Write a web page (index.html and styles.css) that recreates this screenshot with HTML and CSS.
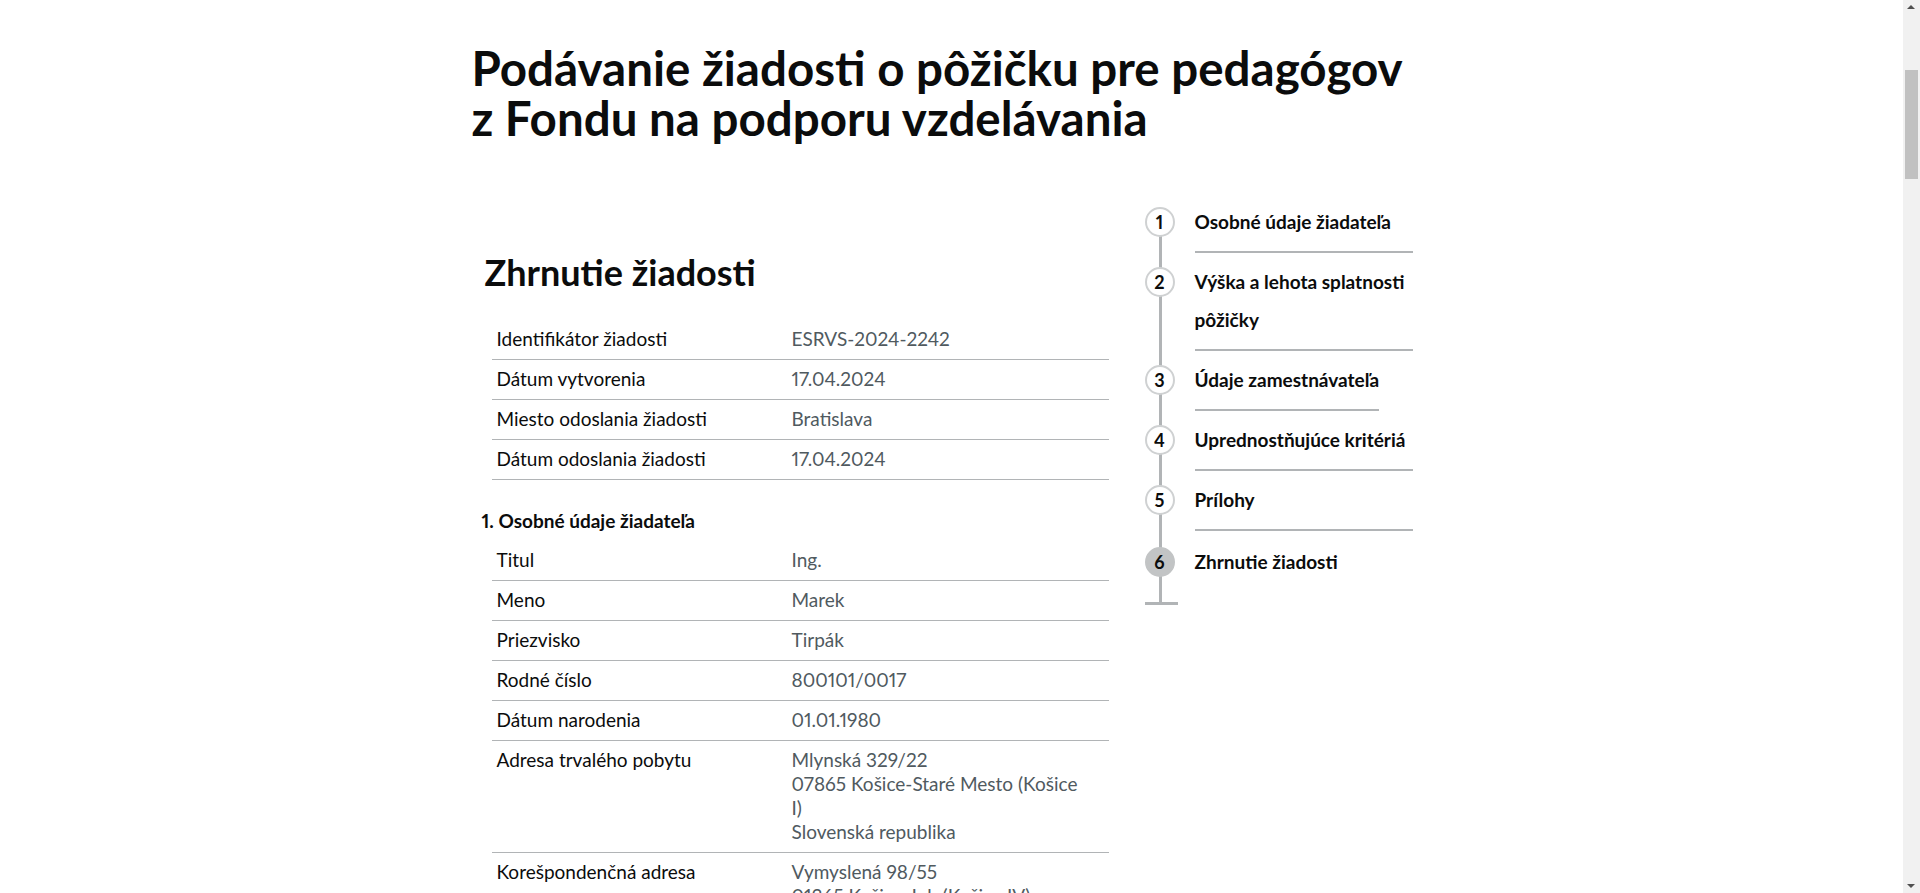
FILE: index.html
```html
<!DOCTYPE html>
<html lang="sk">
<head>
<meta charset="utf-8">
<title>Zhrnutie žiadosti</title>
<link rel="stylesheet" href="styles.css">
</head>
<body>
<main class="page">
  <h1 class="title">Podávanie žiadosti o pôžičku pre pedagógov<br>z Fondu na podporu vzdelávania</h1>
  <div class="columns">
    <section class="main">
      <h2 class="heading">Zhrnutie žiadosti</h2>
      <dl class="summary">
        <div class="row"><dt>Identifikátor žiadosti</dt><dd>ESRVS-2024-2242</dd></div>
        <div class="row"><dt>Dátum vytvorenia</dt><dd>17.04.2024</dd></div>
        <div class="row"><dt>Miesto odoslania žiadosti</dt><dd>Bratislava</dd></div>
        <div class="row"><dt>Dátum odoslania žiadosti</dt><dd>17.04.2024</dd></div>
      </dl>
      <h3 class="subheading">1. Osobné údaje žiadateľa</h3>
      <dl class="summary">
        <div class="row"><dt>Titul</dt><dd>Ing.</dd></div>
        <div class="row"><dt>Meno</dt><dd>Marek</dd></div>
        <div class="row"><dt>Priezvisko</dt><dd>Tirpák</dd></div>
        <div class="row"><dt>Rodné číslo</dt><dd>800101/0017</dd></div>
        <div class="row"><dt>Dátum narodenia</dt><dd>01.01.1980</dd></div>
        <div class="row"><dt>Adresa trvalého pobytu</dt><dd>Mlynská 329/22<br>07865 Košice-Staré Mesto (Košice I)<br>Slovenská republika</dd></div>
        <div class="row"><dt>Korešpondenčná adresa</dt><dd>Vymyslená 98/55<br>01365 Košice-Juh (Košice IV)<br>Slovenská republika</dd></div>
        <div class="row"><dt>Telefónne číslo</dt><dd>+421 900 123 456</dd></div>
        <div class="row"><dt>E-mail</dt><dd>marek.tirpak@example.sk</dd></div>
      </dl>
      <h3 class="subheading">2. Výška a lehota splatnosti pôžičky</h3>
      <dl class="summary">
        <div class="row"><dt>Výška pôžičky</dt><dd>5 000 €</dd></div>
        <div class="row"><dt>Lehota splatnosti</dt><dd>5 rokov</dd></div>
      </dl>
      <h3 class="subheading">3. Údaje zamestnávateľa</h3>
      <dl class="summary">
        <div class="row"><dt>Názov zamestnávateľa</dt><dd>Základná škola</dd></div>
        <div class="row"><dt>IČO</dt><dd>00123456</dd></div>
      </dl>
    </section>
    <aside class="side">
      <ol class="steps">
        <li class="step"><span class="marker">1</span><span class="label">Osobné údaje žiadateľa</span></li>
        <li class="step"><span class="marker">2</span><span class="label">Výška a lehota splatnosti pôžičky</span></li>
        <li class="step"><span class="marker">3</span><span class="label label-fit">Údaje zamestnávateľa</span></li>
        <li class="step"><span class="marker">4</span><span class="label">Uprednostňujúce kritériá</span></li>
        <li class="step"><span class="marker">5</span><span class="label">Prílohy</span></li>
        <li class="step step-current"><span class="marker">6</span><span class="label">Zhrnutie žiadosti</span></li>
      </ol>
    </aside>
  </div>
</main>
<div class="scrollbar" aria-hidden="true">
  <span class="scroll-arrow scroll-up"></span>
  <span class="scroll-thumb"></span>
  <span class="scroll-arrow scroll-down"></span>
</div>
</body>
</html>
```
FILE: styles.css
```css
html, body {
  margin: 0;
  padding: 0;
  background: #ffffff;
}

body {
  box-sizing: border-box;
  padding-right: 17px;
  font-family: Lato, "Open Sans", sans-serif;
  color: #0b0c0c;
  font-variant-numeric: proportional-nums;
}

.page {
  width: 960px;
  margin: 0 auto;
  padding: 43px 0 200px;
}

.title {
  margin: 0 0 50px;
  font-size: 47.5px;
  line-height: 50px;
  font-weight: 700;
}

.columns {
  display: flex;
  align-items: flex-start;
}

.main {
  width: 638px;
  flex: 0 0 638px;
  padding-top: 59px;
}

.heading {
  margin: 0 0 28px 13px;
  font-size: 36px;
  line-height: 40px;
  font-weight: 700;
}

.subheading {
  margin: 29px 0 8px 10px;
  font-size: 19px;
  line-height: 24px;
  font-weight: 700;
}

.summary {
  margin: 0 0 0 20px;
  width: 617px;
}

.row {
  display: grid;
  grid-template-columns: 300px 292px;
  padding: 7px 0 8px;
  border-bottom: 1px solid #b1b4b6;
  font-size: 19px;
  line-height: 24px;
}

.row dt {
  margin: 0;
  padding-left: 5px;
  color: #0b0c0c;
}

.row dd {
  margin: 0;
  color: #505a5f;
}

.side {
  margin-left: 35px;
  width: 268px;
}

.steps {
  position: relative;
  list-style: none;
  margin: 0;
  padding: 0 0 14px;
}

.steps::before {
  content: "";
  position: absolute;
  left: 14px;
  top: 29px;
  bottom: 0;
  width: 3px;
  background: #b1b4b6;
}

.steps::after {
  content: "";
  position: absolute;
  left: 0;
  bottom: 0;
  width: 33px;
  height: 3px;
  background: #b1b4b6;
}

.step {
  position: relative;
  display: flex;
  align-items: flex-start;
  gap: 20px;
}

.marker {
  position: relative;
  z-index: 1;
  flex: 0 0 30px;
  box-sizing: border-box;
  width: 30px;
  height: 30px;
  margin-top: 14px;
  border: 2px solid #cfd1d2;
  border-radius: 50%;
  background: #ffffff;
  font-size: 18px;
  font-weight: 700;
  line-height: 26px;
  text-align: center;
}

.step-current {
  margin-top: 2px;
}

.step-current .marker {
  background: #c2c4c5;
  border-color: #c2c4c5;
}

.label {
  flex: 1 1 auto;
  padding: 10px 0;
  border-bottom: 2px solid #b1b4b6;
  font-size: 19px;
  font-weight: 700;
  line-height: 38px;
}

.label-fit {
  flex: 0 0 auto;
}

.step-current .label {
  border-bottom: 0;
}

.scrollbar {
  position: fixed;
  top: 0;
  right: 0;
  bottom: 0;
  width: 17px;
  background: #f1f1f1;
}

.scroll-thumb {
  position: absolute;
  top: 70px;
  left: 2px;
  width: 13px;
  height: 109px;
  background: #c1c1c1;
}

.scroll-arrow {
  position: absolute;
  left: 4px;
  width: 0;
  height: 0;
  border-left: 4px solid transparent;
  border-right: 4px solid transparent;
}

.scroll-up {
  top: 5px;
  border-bottom: 4px solid #505050;
}

.scroll-down {
  bottom: 5px;
  border-top: 4px solid #505050;
}
```
